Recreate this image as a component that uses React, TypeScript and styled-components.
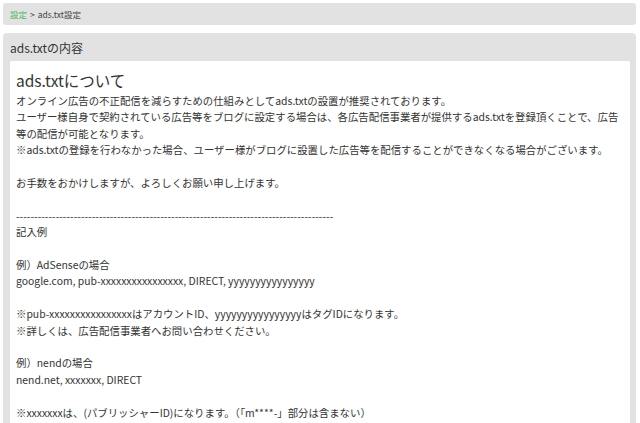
import React from "react"
import styled, { createGlobalStyle } from "styled-components"

const GlobalStyle = createGlobalStyle`
    html, body {
        margin: 0;
        padding: 0;
        background: #ffffff;
        font-family: "Noto Sans CJK JP", "Noto Sans", sans-serif;
        color: #333333;
    }
`

const Page = styled.div`
    display: flex;
    flex-direction: column;
    gap: 8px;
    padding: 3px 4px 0 3px;
`

const Breadcrumb = styled.div`
    display: flex;
    align-items: center;
    gap: 3px;
    height: 22px;
    padding: 0 7px;
    background: #e2e2e2;
    border-radius: 3px;
    font-size: 8.5px;
    color: #444444;
`

const CrumbLink = styled.a`
    color: #4cb85c;
    text-decoration: none;
`

const Panel = styled.section`
    background: #e2e2e2;
    border-radius: 4px 4px 0 0;
    padding: 0 6px 0 7px;
`

const PanelHeading = styled.h2`
    margin: 0;
    height: 28px;
    display: flex;
    align-items: center;
    font-size: 12px;
    font-weight: normal;
    color: #333333;
`

const PanelBody = styled.div`
    background: #ffffff;
    border-radius: 2px 2px 0 0;
    padding: 8px 8px 20px 6px;
`

const Title = styled.h3`
    margin: 0 0 2px;
    font-size: 15.5px;
    line-height: 22px;
    font-weight: normal;
    color: #333333;
`

const Text = styled.div`
    font-size: 10.4px;
    line-height: 16.4px;
    color: #333333;
`

const Line = styled.div<{ $blank?: boolean }>`
    min-height: ${(p) => (p.$blank ? "16.4px" : "0")};
`

const intro = [
    "オンライン広告の不正配信を減らすための仕組みとしてads.txtの設置が推奨されております。",
    "ユーザー様自身で契約されている広告等をブログに設定する場合は、各広告配信事業者が提供するads.txtを登録頂くことで、広告等の配信が可能となります。",
    "※ads.txtの登録を行わなかった場合、ユーザー様がブログに設置した広告等を配信することができなくなる場合がございます。",
    "",
    "お手数をおかけしますが、よろしくお願い申し上げます。",
    "",
    "-".repeat(88),
    "記入例",
    "",
    "例）AdSenseの場合",
    "google.com, pub-xxxxxxxxxxxxxxxx, DIRECT, yyyyyyyyyyyyyyyy",
    "",
    "※pub-xxxxxxxxxxxxxxxxはアカウントID、yyyyyyyyyyyyyyyyはタグIDになります。",
    "※詳しくは、広告配信事業者へお問い合わせください。",
    "",
    "例）nendの場合",
    "nend.net, xxxxxxx, DIRECT",
    "",
    "※xxxxxxxは、(パブリッシャーID)になります。（「m****-」部分は含まない）",
    "",
]

export default function App() {
    return (
        <>
            <GlobalStyle />
            <Page>
                <Breadcrumb>
                    <CrumbLink href="#">設定</CrumbLink>
                    <span>&gt;</span>
                    <span>ads.txt設定</span>
                </Breadcrumb>
                <Panel>
                    <PanelHeading>ads.txtの内容</PanelHeading>
                    <PanelBody>
                        <Title>ads.txtについて</Title>
                        <Text>
                            {intro.map((line, i) => (
                                <Line key={i} $blank={line === ""}>
                                    {line}
                                </Line>
                            ))}
                        </Text>
                    </PanelBody>
                </Panel>
            </Page>
        </>
    )
}
